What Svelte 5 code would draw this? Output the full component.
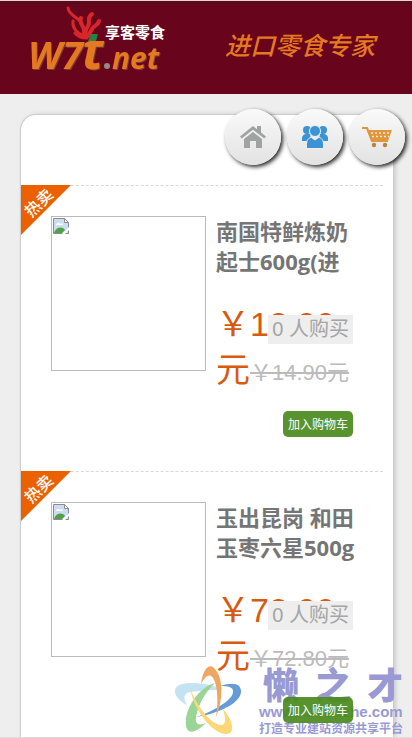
<script>
  const products = [
    { title: '南国特鲜炼奶起士600g(进口零食)', price: '12.90', market: '14.90', sold: 0 },
    { title: '玉出昆岗 和田玉枣六星500g', price: '72.00', market: '72.80', sold: 0 }
  ];
</script>

<div class="page">
  <header>
    <a class="logo" href="#home" aria-label="W7t.net 享客零食">
      <svg width="140" height="72" viewBox="0 0 140 72">
        <g class="brand">
          <text x="-2" y="64" font-size="38">W7</text>
          <text x="52" y="64" font-size="52">t</text>
          <text x="82" y="64" font-size="30">net</text>
        </g>
        <circle cx="77" cy="61" r="3" fill="#948a83" />
        <path d="M48 22h26l-2 14H48z" fill="#68041b" />
        <g fill="none" stroke="#d8262a" stroke-linecap="round">
          <path d="M38 3c1 7 9 9 13 14" stroke-width="3" />
          <path d="M43 16c-1 7 4 12 11 15" stroke-width="3" />
          <path d="M51 13c-3 6 5 8 3 16" stroke-width="4" />
          <path d="M62 9c-6 4-1 7-4 12-2 3-3 6-2 9" stroke-width="4" />
          <path d="M69 16c-1 5-5 4-7 8l-4 7" stroke-width="4" />
          <path d="M45 28c3 4 7 5 12 5" stroke-width="3" />
        </g>
        <path d="M61 29h7l-2 7h-8z" fill="#258245" />
        <text x="75" y="33" class="name">享客零食</text>
      </svg>
    </a>
    <p class="slogan">进口零食专家</p>
  </header>

  <nav>
    <a href="#home" aria-label="首页">
      <svg width="28" height="28" viewBox="0 0 28 28" fill="#9fa3a1">
        <path d="M1 13.500L14 3l4 3.200V3h4v6.500l5 4-1.700 2L14 6.700 2.700 15.500z" />
        <path d="M14 9l9 7v9h-6v-7h-6v7H5v-9z" />
      </svg>
    </a>
    <a href="#user" aria-label="会员">
      <svg width="28" height="28" viewBox="0 0 28 28" fill="#3b93d3">
        <circle cx="6" cy="7" r="4" /><circle cx="22" cy="7" r="4" />
        <path d="M1 18v-3c0-2 2-4 4-4h4l1 7zM27 18v-3c0-2-2-4-4-4h-4l-1 7z" />
        <g stroke="#efefef" stroke-width="1">
          <circle cx="14" cy="8" r="5.500" />
          <path d="M5.500 25.500v-4c0-4 2-7 5-7l3.500 2.500 3.500-2.500c3 0 5 3 5 7v4z" />
        </g>
      </svg>
    </a>
    <a href="#cart" aria-label="购物车">
      <svg width="32" height="28" viewBox="0 0 32 28">
        <path d="M1 5h5l5 13h16" fill="none" stroke="#df963d" stroke-width="2.200" />
        <path d="M7 7h24l-4 11H11z" fill="#df963d" />
        <path d="M10 10h19M11 13.500h17" stroke="#f7e7cf" stroke-width="1.500" stroke-dasharray="2 2" />
        <circle cx="13" cy="22" r="2.200" fill="#b98243" /><circle cx="24" cy="22" r="2.200" fill="#b98243" />
      </svg>
    </a>
  </nav>

  <main>
    {#each products as product}
      <article>
        <span class="ribbon"><span>热卖</span></span>
        <a class="photo" href="#product" aria-label={product.title}>
          <svg width="16" height="16" viewBox="0 0 16 16">
            <path d="M.5.500h11l4 4v11H.5z" fill="#cbdcf3" stroke="#8c8c8c" />
            <path d="M3 7c0-2 3-3 4-1 2-1 3 0 3 1z" fill="#fff" />
            <path d="M1 15c2-6 8-7 11-3l-3 3z" fill="#53a046" />
            <path d="M9 16l7-7v3l-4 4z" fill="#fff" />
            <path d="M11.500.500v4h4z" fill="#fff" stroke="#8c8c8c" />
          </svg>
        </a>
        <div class="info">
          <h2>{product.title}</h2>
          <div class="prices">
            <strong>￥{product.price}元</strong><del>￥{product.market}元</del>
            <span class="sold">{product.sold} 人购买</span>
          </div>
          <button type="button">加入购物车</button>
        </div>
      </article>
    {/each}
  </main>

  <aside>
    <svg width="72" height="72" viewBox="0 0 72 72">
      <path d="M50 25C31 18 4 16 2 26c-1 6 6 12 12 15-4-7-4-12 4-13 9-2 20-1 32-3z" fill="#c3e3f4" />
      <path d="M66 22c8 10-8 25-43 31 20-7 38-18 37-26 0-4-5-5-13-5 9-3 16-3 19 0z" fill="#659bd7" />
      <path d="M28 20C30 5 36-1 41 4c10 9 9 33 2 49 3-18 1-38-5-41-4-2-7 3-10 8z" fill="#eda762" />
      <path d="M42 19C26 23 11 45 13 61c1 11 11 7 20-2-7 3-11 1-10-5 1-10 8-25 19-35z" fill="#9bd596" />
      <path d="M17 24c8 21 23 38 32 37 5-1 3-9 1-16 8 9 12 20 7 24-9 6-34-14-40-45z" fill="#fbd777" />
    </svg>
    <div class="site">
      <p class="big"><span>懒</span><span>之</span><span>才</span></p>
      <p class="url">www.lanrenzhe.com</p>
      <p class="note">打造专业建站资源共享平台</p>
    </div>
  </aside>
</div>

<style>
  :global(body) {
    margin: 0;
    background: #eee;
  }
  .page {
    position: relative;
    box-sizing: border-box;
    min-height: 100vh;
    display: flex;
    flex-direction: column;
    border-bottom: 1px solid #ddd;
    font-family: "Liberation Sans", "Noto Sans CJK SC", sans-serif;
  }
  p, h2 {
    margin: 0;
  }
  header {
    box-sizing: border-box;
    height: 94px;
    display: flex;
    justify-content: space-between;
    padding: 4px 37px 0 30px;
    background: #68041b;
    border-top: 1px solid #f3cdd3;
    box-shadow: inset 0 3px 0 #550d1c;
  }
  .logo svg {
    display: block;
    overflow: visible;
  }
  .brand {
    font-family: "Open Sans", "Noto Sans", sans-serif;
    font-weight: 700;
    font-style: italic;
    fill: #e47a20;
    filter: drop-shadow(1px 1px 0 #8f725980);
  }
  .name {
    font: 700 15px "Noto Sans CJK SC", sans-serif;
    fill: #fff;
  }
  .slogan {
    padding-top: 21px;
    font: italic 500 25px/36px "Noto Sans CJK SC", sans-serif;
    color: #e47a20;
  }
  nav {
    position: absolute;
    top: 109px;
    right: 7px;
    z-index: 3;
    display: flex;
    gap: 6px;
  }
  nav a {
    width: 56px;
    height: 56px;
    display: flex;
    align-items: center;
    justify-content: center;
    border-radius: 50%;
    background: linear-gradient(#fafafa, #e2e2e2);
    box-shadow: 2px 2px 4px #222;
  }
  main {
    flex: 1;
    margin: 20px 18px 0 20px;
    padding-top: 70px;
    border: 1px solid #ccc;
    border-bottom: 0;
    border-radius: 16px 16px 0 0;
    background: #fff;
    box-shadow: 2px 0 4px #ccc;
  }
  article {
    position: relative;
    display: flex;
    gap: 10px;
    margin-right: 10px;
    padding: 30px 22px 34px 30px;
    border-top: 1px dashed #d8d8d8;
  }
  article:last-child {
    padding-bottom: 12px;
  }
  .ribbon {
    position: absolute;
    top: -1px;
    left: 0;
    width: 50px;
    height: 50px;
    background: #eb6100;
    clip-path: polygon(0 0, 100% 0, 0 100%);
  }
  .ribbon span {
    display: block;
    width: 34px;
    font: 500 16px/34px "Noto Sans CJK SC", sans-serif;
    text-align: center;
    color: #fff;
    transform: rotate(-45deg);
  }
  .photo {
    box-sizing: border-box;
    flex: none;
    width: 155px;
    height: 155px;
    padding: 1px;
    border: 1px solid #bbb;
  }
  .photo svg {
    display: block;
  }
  .info {
    flex: 1;
    min-width: 0;
  }
  h2 {
    height: 60px;
    overflow: hidden;
    font: 700 22px/30px "Open Sans", "Noto Sans CJK SC", sans-serif;
    color: #757575;
  }
  .prices {
    position: relative;
    height: 92px;
    margin-top: 25px;
    font-size: 34px;
    line-height: 46px;
  }
  strong {
    font-weight: 400;
    color: #d85a10;
  }
  del {
    font-size: 22px;
    line-height: 22px;
    vertical-align: 2px;
    color: #bbb;
  }
  .sold {
    position: absolute;
    top: 14px;
    right: 8px;
    padding: 0 4px;
    background: #eee;
    font-size: 20px;
    line-height: 29px;
    color: #a5a5a5;
  }
  button {
    position: relative;
    z-index: 2;
    display: block;
    margin: 18px 8px 0 auto;
    padding: 0 5px;
    border: 0;
    border-radius: 5px;
    background: rgba(75, 138, 28, 0.92);
    font: 12px/26px "Noto Sans CJK SC", sans-serif;
    color: #fff;
  }
  aside {
    position: absolute;
    right: 9px;
    bottom: 0;
    z-index: 1;
    display: flex;
    align-items: center;
    gap: 14px;
    pointer-events: none;
    color: #9999d3;
  }
  .site {
    width: 144px;
    font-family: "Liberation Sans", "Noto Sans CJK SC", sans-serif;
    font-weight: 700;
  }
  .big {
    display: flex;
    justify-content: space-between;
    padding-left: 4px;
    font: 900 36px/40px "Noto Sans CJK SC", sans-serif;
  }
  .url {
    font-size: 15px;
    line-height: 18px;
  }
  .note {
    font-size: 12px;
    line-height: 16px;
  }
</style>
